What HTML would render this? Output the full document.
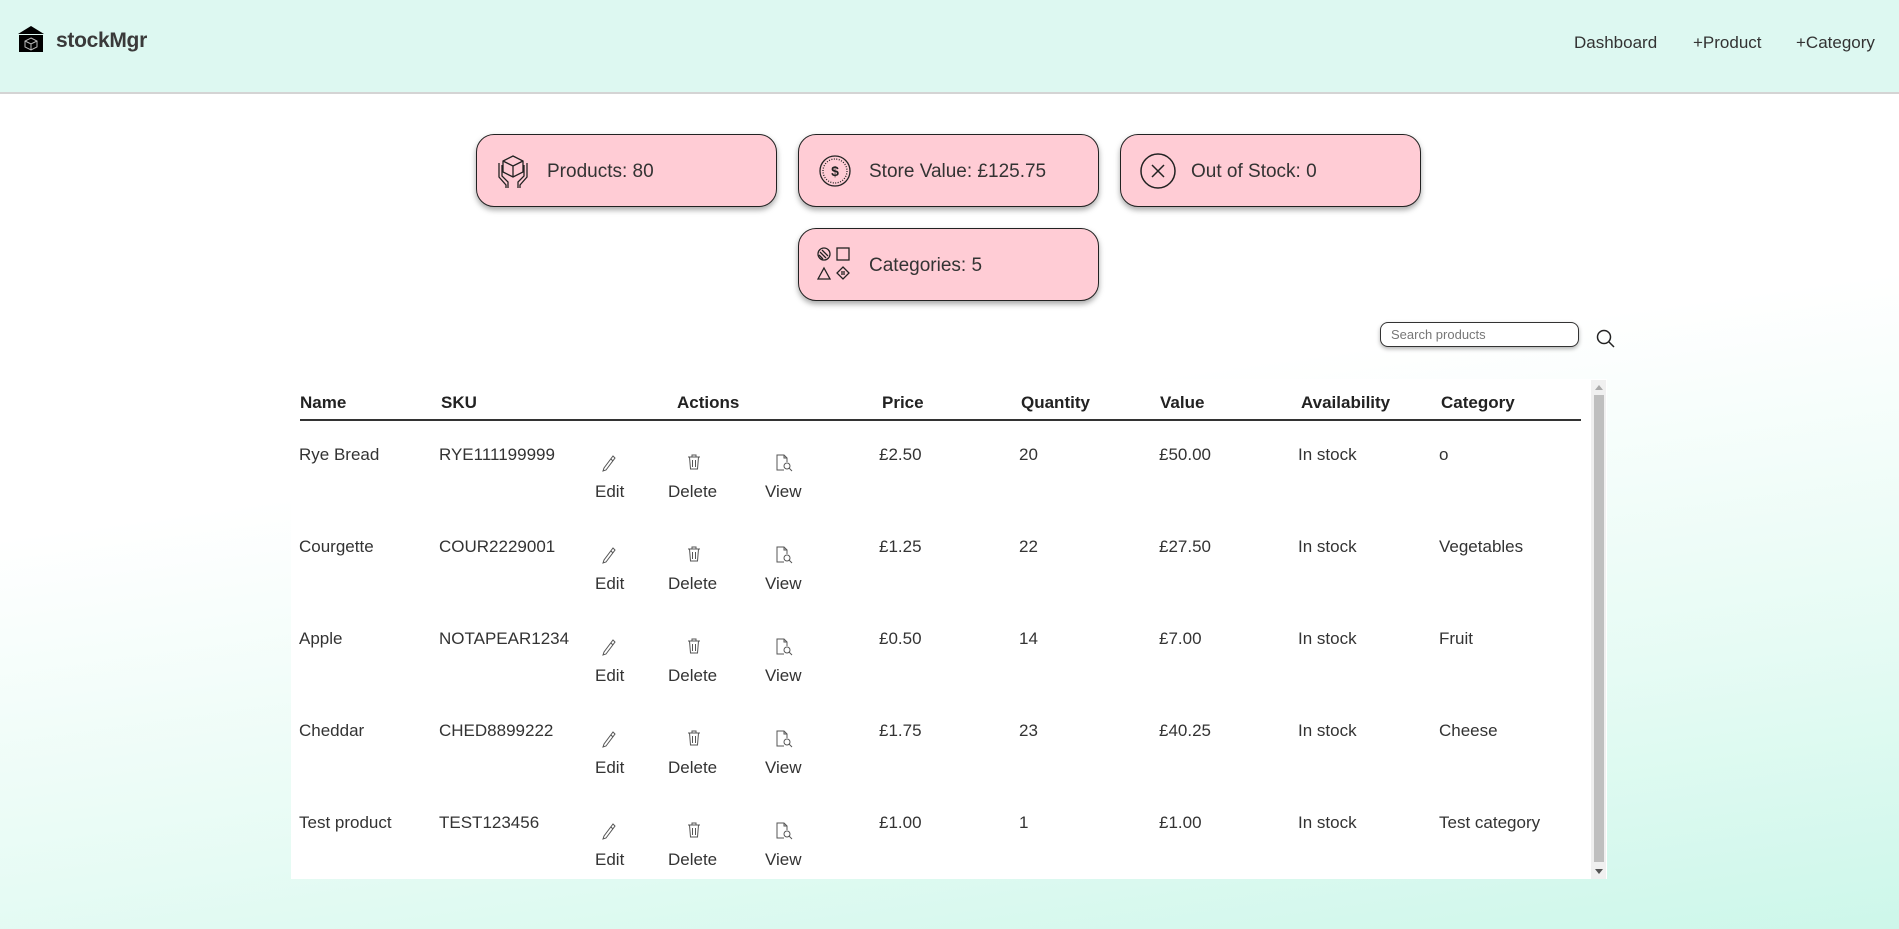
<!DOCTYPE html>
<html><head><meta charset="utf-8">
<style>
*{box-sizing:border-box;margin:0;padding:0}
html,body{width:1899px;height:929px;overflow:hidden}
body{font-family:"Liberation Sans",sans-serif;color:#333;position:relative;
background:linear-gradient(172deg,#ffffff 0%,#ffffff 45%,#e6fbf4 75%,#cdf7ea 100%);}
.hdr{position:absolute;left:0;top:0;width:1899px;height:94px;background:#ddf8f1;border-bottom:2px solid #d4d4d4}
.logo{position:absolute;left:18px;top:26px}
.brand{position:absolute;left:56px;top:29px;font-size:21px;font-weight:bold;color:#3a3a3a;letter-spacing:-0.3px}
.nav{position:absolute;top:33px;font-size:17px;color:#333}
.card{position:absolute;width:301px;height:73px;background:#ffccd5;border:1px solid #222;border-radius:18px;box-shadow:0 3px 6px rgba(0,0,0,.35)}
.card svg{position:absolute;left:18px;top:18px}
.card span{position:absolute;left:70px;top:26px;font-size:19px;color:#333}
.search{position:absolute;left:1380px;top:322px;width:199px;height:25px;border:1px solid #333;border-radius:8px;background:#fff;box-shadow:0 2px 4px rgba(0,0,0,.3);font-size:13px;color:#777;padding:4px 10px}
.tbl{position:absolute;left:291px;top:379px;width:1316px;height:500px;background:#fff}
.sb{position:absolute;left:1300px;top:1px;width:15px;height:499px;background:#f0f0f0}
.sb .th{position:absolute;left:3px;top:15px;width:10px;height:467px;background:#bfbfbf}
.sb .up{position:absolute;left:4px;top:5px;border-left:4px solid transparent;border-right:4px solid transparent;border-bottom:5px solid #aaa}
.sb .dn{position:absolute;left:4px;bottom:5px;border-left:4px solid transparent;border-right:4px solid transparent;border-top:5px solid #555}
.t{position:absolute;font-size:17px;color:#333;white-space:nowrap}
.h{font-weight:bold;top:14px;color:#222}
.line{position:absolute;left:9px;top:40px;width:1281px;height:2px;background:#333}
.ic{position:absolute}
</style></head><body>
<div class="hdr">
<svg class="logo" width="26" height="28" viewBox="0 0 26 28"><path d="M13 0 L26 8 L0 8 Z" fill="#000"/><rect x="1" y="9" width="24" height="17" fill="#000"/><path d="M13 12 L19 15 L19 21 L13 24 L7 21 L7 15 Z M7 15 L13 18 L19 15 M13 18 L13 24" fill="none" stroke="#bbb" stroke-width="1"/></svg>
<div class="brand">stockMgr</div>
<div class="nav" style="left:1574px">Dashboard</div>
<div class="nav" style="left:1693px">+Product</div>
<div class="nav" style="left:1796px">+Category</div>
</div>

<div class="card" style="left:476px;top:134px"><svg width="36" height="36" viewBox="0 0 36 36" fill="none" stroke="#222" stroke-width="1.3"><path d="M18 3 L28 8 L28 19 L18 24 L8 19 L8 8 Z M8 8 L18 13 L28 8 M18 13 L18 24"/><path d="M4 10 L4 24 L11 32 L11 35 M7 12 L7 23 L13 29 L13 35 M32 10 L32 24 L25 32 L25 35 M29 12 L29 23 L23 29 L23 35"/></svg><span>Products: 80</span></div>
<div class="card" style="left:798px;top:134px"><svg width="36" height="36" viewBox="0 0 36 36" fill="none" stroke="#222" stroke-width="1.3"><circle cx="18" cy="18" r="15"/><circle cx="18" cy="18" r="12" stroke-dasharray="1 1.5"/><text x="18" y="23" font-size="14" font-family="Liberation Sans" font-weight="bold" text-anchor="middle" fill="#222" stroke="none">$</text></svg><span>Store Value: £125.75</span></div>
<div class="card" style="left:1120px;top:134px"><svg width="38" height="38" viewBox="0 0 38 38" fill="none" stroke="#222" stroke-width="1.5"><circle cx="19" cy="18" r="17"/><path d="M13 12 L25 24 M25 12 L13 24"/></svg><span>Out of Stock: 0</span></div>
<div class="card" style="left:798px;top:228px"><svg width="36" height="36" viewBox="0 0 36 36" fill="none" stroke="#222" stroke-width="1.3"><circle cx="7" cy="7" r="6"/><path d="M3 5 L9 11 M5 3 L11 9 M2 8 L6 12"/><rect x="20" y="1" width="12" height="12"/><path d="M7 21 L13 32 L1 32 Z"/><path d="M26 20 L32 26 L26 32 L20 26 Z M25 24 L25 28 M27 24 L27 28"/></svg><span>Categories: 5</span></div>

<div class="search">Search products</div>
<svg style="position:absolute;left:1596px;top:329px" width="20" height="20" viewBox="0 0 20 20" fill="none" stroke="#222" stroke-width="1.5"><circle cx="8" cy="8" r="6.5"/><path d="M13 13 L18 18"/></svg>

<div class="tbl">
<div class="t h" style="left:9px">Name</div>
<div class="t h" style="left:150px">SKU</div>
<div class="t h" style="left:386px">Actions</div>
<div class="t h" style="left:591px">Price</div>
<div class="t h" style="left:730px">Quantity</div>
<div class="t h" style="left:869px">Value</div>
<div class="t h" style="left:1010px">Availability</div>
<div class="t h" style="left:1150px">Category</div>
<div class="line"></div>
<div class="sb"><div class="up"></div><div class="th"></div><div class="dn"></div></div>
<div id="rows"></div>
</div>
<script>
var d=[["Rye Bread","RYE111199999","£2.50","20","£50.00","o"],["Courgette","COUR2229001","£1.25","22","£27.50","Vegetables"],["Apple","NOTAPEAR1234","£0.50","14","£7.00","Fruit"],["Cheddar","CHED8899222","£1.75","23","£40.25","Cheese"],["Test product","TEST123456","£1.00","1","£1.00","Test category"]];
var h="";
d.forEach(function(r,i){var y=66+i*92;
h+='<div class="t" style="left:8px;top:'+y+'px">'+r[0]+'</div>';
h+='<div class="t" style="left:148px;top:'+y+'px">'+r[1]+'</div>';
h+='<div class="t" style="left:588px;top:'+y+'px">'+r[2]+'</div>';
h+='<div class="t" style="left:728px;top:'+y+'px">'+r[3]+'</div>';
h+='<div class="t" style="left:868px;top:'+y+'px">'+r[4]+'</div>';
h+='<div class="t" style="left:1007px;top:'+y+'px">In stock</div>';
h+='<div class="t" style="left:1148px;top:'+y+'px">'+r[5]+'</div>';
var iy=y+10;
h+='<svg class="ic" style="left:310px;top:'+iy+'px" width="16" height="18" viewBox="0 0 16 18" fill="none" stroke="#555" stroke-width="1"><path d="M12 1 L14 3 L5 15 L2 16 L3 13 Z M10 4 L12 6"/></svg>';
h+='<svg class="ic" style="left:396px;top:'+(iy-2)+'px" width="14" height="18" viewBox="0 0 14 18" fill="none" stroke="#555" stroke-width="1"><path d="M1 4 L13 4 M5 4 L5 2 L9 2 L9 4 M2.5 4 L3.5 16 L10.5 16 L11.5 4 M5.5 7 L5.5 14 M8.5 7 L8.5 14"/></svg>';
h+='<svg class="ic" style="left:484px;top:'+(iy-1)+'px" width="18" height="18" viewBox="0 0 18 18" fill="none" stroke="#555" stroke-width="1"><path d="M9 16 L2 16 L2 1 L9 1 L12 4 L12 8 M9 1 L9 4 L12 4"/><circle cx="12" cy="12" r="3"/><path d="M14 14 L17 17"/></svg>';
var ly=y+37;
h+='<div class="t" style="left:304px;top:'+ly+'px">Edit</div>';
h+='<div class="t" style="left:377px;top:'+ly+'px">Delete</div>';
h+='<div class="t" style="left:474px;top:'+ly+'px">View</div>';
});
document.getElementById("rows").innerHTML=h;
</script>
</body></html>
